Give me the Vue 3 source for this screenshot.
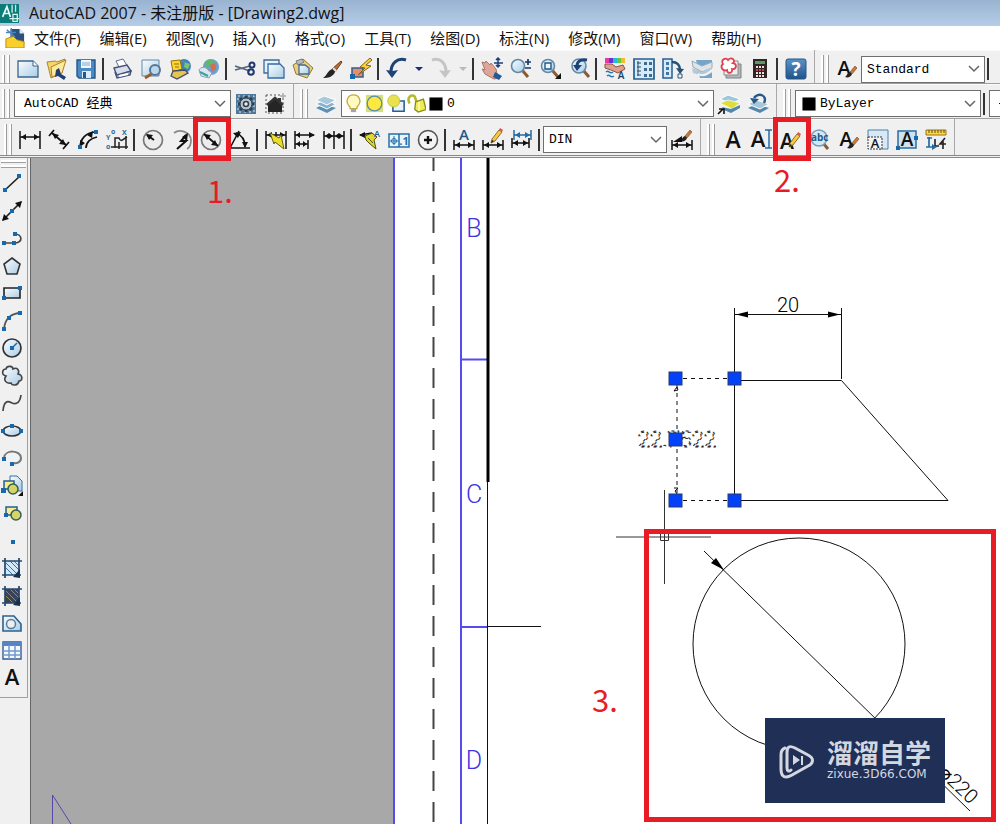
<script setup>
const menus = ['文件(F)', '编辑(E)', '视图(V)', '插入(I)', '格式(O)', '工具(T)', '绘图(D)', '标注(N)', '修改(M)', '窗口(W)', '帮助(H)']

const letterA = (x, y, size, fill = '#111') =>
  `<text x="${x}" y="${y}" font-size="${size}" text-anchor="middle" fill="${fill}" font-weight="600">A</text>`
const brush = (x, y) =>
  `<g transform="translate(${x} ${y})"><path d="M10 0L5 6l2 2 5-6z" fill="#c47b3a" stroke="#7a451c" stroke-width=".6"/><path d="M5 6l2 2c-1 3-4 4-7 3 2-1 2-4 5-5z" fill="#222"/></g>`
const pencil = (x, y) =>
  `<g transform="translate(${x} ${y})"><path d="M0 13l1-4 7-9 3 2-7 9z" fill="#f5c945" stroke="#79520e" stroke-width=".8"/><path d="M8 0l3 2 1-2-3-2z" fill="#d5594c"/><path d="M0 13l1-3 2 1z" fill="#222"/></g>`
const lens = (x, y, r = 6) =>
  `<path d="M${x + 4} ${y + 4}l6 7" stroke="#8a5a34" stroke-width="3"/><circle cx="${x}" cy="${y}" r="${r}" fill="url(#sheet)" stroke="#6289a8" stroke-width="1.6"/>`
const linear = (y, x1, x2, c = '#111') =>
  `<path d="M${x1} ${y - 5}v10M${x2} ${y - 5}v10M${x1} ${y}H${x2}" stroke="${c}" stroke-width="1.5" fill="none"/><path d="M${x1 + 1} ${y}l5-3v6zM${x2 - 1} ${y}l-5-3v6z" fill="${c}"/>`
const node = (x, y) => `<rect x="${x - 2}" y="${y - 2}" width="4" height="4" fill="#1769ad"/>`
const hatch = (bg, line) =>
  `<rect x="4" y="4" width="14" height="14" fill="${bg}"/><path d="M5 6l12 12M5 11l7 7M9 4l9 9M13 4l5 5" stroke="${line}"/><path d="M1 4h20M1 18h19M4 1v20M18 1v16" stroke="#24486e" stroke-width="1.7"/><path d="M12 20l7-8v9z" fill="#17304d"/>`

const icons = {
  app: '<rect width="22" height="22" fill="#0b7c77"/><path d="M3 15L8 3l4 12M5 11h6" fill="none" stroke="#e8ffff" stroke-width="2"/><path d="M14 1v9M18 1v8M11 17h11M15 12h5v8h-5z" stroke="#d4f3ef" stroke-width="1.5" fill="none"/>',
  doc: '<path d="M6 1h10l5 5v12H6z" fill="#2b5180"/><path d="M16 1v5h5" fill="#dfeaf5"/><path d="M1 12l8-3 4 4 8 2v7H1z" fill="#f9cf2c" stroke="#b8860b"/><path d="M2 2l9 8M7 0v10M1 5h11" stroke="#4d86bd" stroke-width="1.5"/>',
  new: '<path d="M1 3h15l5 5v11H1z" fill="url(#sheet)" stroke="#39668f" stroke-width="1.3"/><path d="M16 3v5h5" fill="#fff" stroke="#39668f"/>',
  open: '<path d="M1 4l8-1 2 1 8-3-3 14-11 5z" fill="#f5d568" stroke="#a9842b"/><path d="M5 9L20 2l-4 13-10 4z" fill="#ffe99b" stroke="#a9842b"/><path d="M10 12l3-2 2 6 5 3-2 3-6-4-3 1z" fill="#213d73"/>',
  save: '<path d="M2 2h18v18H4l-2-2z" fill="#4b8ac2" stroke="#24568b" stroke-width="1.4"/><path d="M6 2h10v8H6z" fill="#eef7ff"/><path d="M7 13h9v7H7z" fill="#dcebf6"/><path d="M8 14h3v6H8z" fill="#24568b"/><path d="M7 5h8M7 7h8" stroke="#83abc9"/>',
  print: '<path d="M5 3l7-2 5 8-8 2z" fill="#fff" stroke="#596d96"/><path d="M3 10l13-3 4 6-14 5z" fill="#d9deea" stroke="#42527c" stroke-width="1.4"/><path d="M4 14l2 6 13-3 1-4-14 4z" fill="#aab5cf" stroke="#42527c" stroke-width="1.4"/><path d="M8 18l9-2" stroke="#fff" stroke-width="2"/>',
  preview: '<path d="M2 2h17v16H2z" fill="url(#sheet)" stroke="#6488a8"/><path d="M13 15l-8 5" stroke="#9a5e2c" stroke-width="3"/><circle cx="15" cy="12" r="5" fill="#b9d8ee" stroke="#567792" stroke-width="2"/>',
  publish: '<circle cx="15" cy="8" r="7" fill="#3f83bd"/><path d="M11 3l5 1-1 5 4 2 2-5z" fill="#7ec46b"/><path d="M2 3l9-1 2 9-9 3z" fill="#ffd62e" stroke="#96700e"/><path d="M5 6h5M6 9h4" stroke="#8c6c16"/><path d="M4 13l12-1 3 3-11 6-6-3z" fill="#e3c74c" stroke="#434b70" stroke-width="1.3"/>',
  globe: '<circle cx="13" cy="9" r="8" fill="#6a9fd0"/><path d="M8 3c3-3 9 0 10 3l-4 5-2-3-5 1z" fill="#62b86a"/><path d="M12 7l5-2 1 6-4 3z" fill="#dc6a4f"/><path d="M1 12c1-3 7-4 9 0l4 3-3 5-8-2z" fill="#dbe6ef" stroke="#8aa1b5"/><path d="M2 14l8 4" stroke="#39a2a0" stroke-width="2"/>',
  cut: '<path d="M1 8l15 5M1 12l15-4" stroke="#56677a" stroke-width="1.7"/><circle cx="18" cy="7" r="2.5" fill="none" stroke="#1e376c" stroke-width="2"/><circle cx="17" cy="14" r="2.8" fill="none" stroke="#1e376c" stroke-width="2"/>',
  copy: '<path d="M1 2h15v13H1z" fill="#e6f1fa" stroke="#376ba1" stroke-width="1.3"/><path d="M5 6h12l4 4v10H5z" fill="url(#sheet)" stroke="#376ba1" stroke-width="1.3"/>',
  paste: '<path d="M1 7l10-6 10 9-6 10-11-4z" fill="#e8cf7c" stroke="#9a7a2c"/><path d="M4 3l6-2 2 3-6 3z" fill="#b8bec5" stroke="#72787e"/><path d="M7 7h6l4 3v6H7z" fill="url(#sheet)" stroke="#3f6b97" stroke-width="1.3"/>',
  brush: '<path d="M20 3l-9 8 3 3 7-10z" fill="#b86e34" stroke="#6b3d1e"/><path d="M11 11l3 3c-2 5-7 6-12 6 4-2 4-7 9-9z" fill="#252525"/><path d="M12 10l4 4" stroke="#ddd" stroke-width="2"/>',
  block: '<path d="M2 10h11v9H2z" fill="#e88d6a" stroke="#315e8d" stroke-width="1.5"/><path d="M20 0l-10 9 5 1-7 7 13-9-5-1 6-5z" fill="#ffcf3b" stroke="#806321"/><path d="M0 16h5v5H0z" fill="#1769ad"/>',
  undo: '<path d="M20 2C11-1 5 6 5 14" fill="none" stroke="#1d4277" stroke-width="3"/><path d="M0 12l6 8 6-8-5 1z" fill="#1d4277"/>',
  redo: '<path d="M2 2c9-3 14 4 14 12" fill="none" stroke="#c5c5c5" stroke-width="3"/><path d="M21 12l-6 8-6-8 5 1z" fill="#c5c5c5"/>',
  pan: '<path d="M1 4l3 1 1-2 4 4 1-2 5 6 1 5 3 4-6 1-9-5-3-5 3 1z" fill="#dfa597" stroke="#a87668"/><path d="M14 14l7 4-3 4-6-3z" fill="#1e5b98"/><path d="M17 0v9M13 5h9M15 2l2-2 2 2M15 7l2 2 2-2" stroke="#173f78" stroke-width="1.5" fill="none"/>',
  zoomrt: lens(8, 8, 6.5) + '<path d="M18 1v6M15 4h6M15 10h6" stroke="#173a65" stroke-width="1.7"/>',
  zoomwin: lens(9, 8, 6.5) + '<path d="M6 5h6v6H6z" fill="#eaf6ff" stroke="#235783" stroke-width="1.4"/><path d="M22 15v6h-6z" fill="#111"/>',
  zoomprev: lens(11, 8, 7) + '<path d="M19 2c-6-1-10 1-10 6" fill="none" stroke="#1d4277" stroke-width="3"/><path d="M5 7l4 6 5-6z" fill="#1d4277"/>',
  props: '<path d="M1 0h4v5H1z" fill="#e939a4"/><path d="M5 0h4v5H5z" fill="#5b36dc"/><path d="M9 0h4v5H9z" fill="#28bad6"/><path d="M13 0h4v5h-4z" fill="#63cb37"/><path d="M17 0h4v5h-4z" fill="#f2bb30"/><path d="M1 6l7 0 4 3 7-2 2 4-7 4-7-3-6-2z" fill="#e0a08a" stroke="#855344"/><path d="M2 14c3-3 3 3 7 0M3 18c3-3 3 3 7 0" stroke="#287ab6" stroke-width="1.5" fill="none"/>' + letterA(17, 21, 10, '#143e6c'),
  dc: '<path d="M1 1h20v20H1z" fill="#d6eaf8" stroke="#245d93" stroke-width="1.7"/><path d="M4 5h4M4 9h4M4 13h4M4 17h4M5 3v15" stroke="#254969"/><path d="M11 4h3v3h-3zM16 4h3v3h-3zM11 10h3v3h-3zM16 10h3v3h-3zM11 16h3v3h-3zM16 16h3v3h-3z" fill="#3d6b90"/>',
  palettes: '<path d="M1 1h9v19H1z" fill="#d6eaf8" stroke="#245d93" stroke-width="1.5"/><path d="M4 4h3v3H4zM4 9h3v3H4zM4 14h3v3H4z" fill="#3c78ac"/><path d="M10 4c5 0 8 3 8 8" stroke="#245178" stroke-width="2.5" fill="none"/><path d="M14 10l8 1-4 5z" fill="#245178"/><path d="M16 16h4v4h-4z" fill="#eaf4fa" stroke="#33536c"/>',
  sheets: '<path d="M5 2h16v18H9z" fill="#74a5cb"/><path d="M1 3l10 5 10-4v6l-10 4-9-5z" fill="#dce5ea" stroke="#98a9b5"/><path d="M1 10l10 4 10-5v6l-9 3-10-3z" fill="#b7c8d4"/><path d="M7 16c5 3 10 0 14-4" stroke="#f1f5f7" stroke-width="2" fill="none"/>',
  markup: '<path d="M6 6h15v14H6z" fill="#b2b7bc" stroke="#7d8287"/><path d="M4 3h14v14H4z" fill="#eee" stroke="#888"/><path d="M3 6c-3-4 3-7 5-4 4-4 8 1 5 3 5 1 3 7-1 6 1 5-5 5-5 1-5 2-7-4-4-6z" fill="#fff" stroke="#e33f52" stroke-width="1.8"/>',
  calc: '<path d="M4 1h14v19H4z" fill="#2e2524"/><path d="M6 3h10v3H6z" fill="#5d9a62"/><path d="M7 9h2M10 9h2M13 9h2M7 12h2M10 12h2M13 12h2M7 15h2M10 15h2M13 15h2M7 18h2M10 18h2M13 18h2" stroke="#f1dddd" stroke-width="2"/><path d="M7 12h2M10 12h2M13 12h2" stroke="#c44848" stroke-width="2"/>',
  help: '<rect x="1" y="1" width="20" height="20" rx="2" fill="url(#helpfill)" stroke="#23568a"/><text x="11" y="18" font-size="19" font-weight="700" fill="#fff" text-anchor="middle">?</text>',
  style: letterA(8, 17, 20) + brush(9, 8),
  gear: '<path d="M1 1h20v20H1z" fill="#4f789b"/><path d="M3 3h16v16H3z" fill="none" stroke="#dbe7ef" stroke-dasharray="2 3"/><path d="M11 3v16M3 11h16M5 5l12 12M17 5L5 17" stroke="#2c3f50" stroke-width="3"/><circle cx="11" cy="11" r="6" fill="#b9c4ca" stroke="#303f4a"/><circle cx="11" cy="11" r="2.5" fill="#e9edf0" stroke="#303f4a" stroke-width="1.5"/>',
  home: '<path d="M2 2h15M2 2v18h17V5" fill="none" stroke="#555" stroke-dasharray="2 2"/><path d="M11 5l7 6v8H4v-8z" fill="#252525"/><path d="M3 12l8-7 8 7" stroke="#333" stroke-width="2.5" fill="none"/><path d="M14 5h3v4h-3z" fill="#333"/><path d="M19 0v6M16 3h6" stroke="#aaa" stroke-width="1.5"/>',
  layers: '<path d="M1 15l8-4 12 4-9 5z" fill="#5b8fb4"/><path d="M1 11l8-4 12 4-9 5z" fill="#86b0cc" stroke="#fff"/><path d="M1 7l8-4 12 4-9 5z" fill="#a9c8dc" stroke="#fff"/>',
  layercur: '<path d="M2 6l8-4 12 4-8 5z" fill="#9fc6df" stroke="#fff"/><path d="M2 10l8-3 12 3-8 6z" fill="#dede3a" stroke="#fff" stroke-width=".7"/><path d="M4 14l9 2 9-4v3l-9 5-7-3z" fill="#5286aa"/><path d="M0 21l5-5M1 16h5v5" stroke="#111" stroke-width="1.6" fill="none"/>',
  layerprev: '<path d="M1 15l8-4 13 4-9 5z" fill="#5687aa"/><path d="M1 11l8-4 13 4-9 5z" fill="#a8c6d9" stroke="#fff"/><path d="M17 10c4-8-6-11-10-5" fill="none" stroke="#285888" stroke-width="2.4"/><path d="M3 5l4 6 5-5z" fill="#285888"/>',
  dlinear: '<path d="M1 2v18M21 2v18M1 8h20" stroke="#111" stroke-width="1.5"/><path d="M2 8l5-3v6zM20 8l-5-3v6z" fill="#111"/>',
  daligned: '<path d="M6 1L1 7M21 13l-6 7M4 4l14 12" stroke="#111" stroke-width="1.7"/><path d="M4 4l7 2-4 4zM18 16l-7-1 4-5z" fill="#111"/>',
  darc: '<path d="M3 19C3 10 9 3 19 3M9 19c0-6 5-10 11-11" stroke="#111" stroke-width="1.7" fill="none"/><path d="M10 6l6-4-1 7zM3 18V11l5 3z" fill="#111"/>' + node(3, 18) + node(19, 3),
  dord: '<path d="M5 18h17M9 19V9h4c2 5 4 1 8-1M20 7v13M13 13v7" stroke="#222" stroke-width="1.5" fill="none"/><g font-size="7" font-weight="700" fill="#286ba0"><text x="0" y="11">Y</text><text x="0" y="20">o</text><text x="5" y="5">o</text><text x="16" y="6">X</text></g>',
  dradius: '<circle cx="11" cy="11" r="9.5" fill="#ededed" stroke="#777" stroke-width="1.7"/><path d="M5 6l7 5" stroke="#111" stroke-width="2"/><path d="M4 5l7 1-4 5z" fill="#111"/>',
  djog: '<path d="M3 4C8 0 19 2 20 11c0 5-2 8-4 9" fill="none" stroke="#888" stroke-width="1.7"/><path d="M15 6l-5 6h5l-9 8" stroke="#111" stroke-width="2" fill="none"/><path d="M17 4l-1 8-5-4z" fill="#111"/>',
  ddia: '<circle cx="11" cy="11" r="9.5" fill="#ededed" stroke="#777" stroke-width="1.7"/><path d="M4 5l14 12" stroke="#111" stroke-width="1.8"/><path d="M4 5l7 1-4 5zM18 17l-7-1 4-5z" fill="#111"/>',
  dangle: '<path d="M1 19h20M1 19L10 2M7 4c6 2 9 7 9 14" stroke="#111" stroke-width="1.6" fill="none"/><path d="M4 4l8-1-3 6zM16 19l-3-6h6z" fill="#111"/>',
  quick: '<path d="M1 2v18M21 2v18M1 6h20M11 3v7" stroke="#111" stroke-width="1.5"/><path d="M2 6l5-3v6zM20 6l-5-3v6z" fill="#111"/><path d="M5 4l9 5 2-3 3 14-9-7-1 2z" fill="#e9df28" stroke="#655b12"/>',
  baseline: '<path d="M1 2v18M14 11v9M1 6h19M1 15h13" stroke="#111" stroke-width="1.5"/><path d="M21 6l-6-3v6zM2 6l4-3v6zM2 15l4-3v6zM13 15l-4-3v6z" fill="#111"/>',
  cont: '<path d="M1 2v18M11 2v18M21 2v18M1 7h20" stroke="#111" stroke-width="1.5"/><path d="M2 7l4-3v6zM10 7L6 4v6zM12 7l4-3v6zM20 7l-4-3v6z" fill="#111"/>',
  leader: '<path d="M1 6l12-2" stroke="#111" stroke-width="1.7"/><path d="M0 6l6-3v6z" fill="#111"/><path d="M6 7l7-3 5 4-3 3 2 9-7-6-3-3z" fill="#ded92a" stroke="#4c4d19"/><path d="M9 9l5 5" stroke="#4c4d19"/>' + letterA(18, 8, 9, '#265a8f'),
  tol: '<path d="M1 5h20v13H1zM11 5v13" stroke="#2370a9" stroke-width="1.5" fill="#e9f4fb"/><circle cx="6" cy="12" r="2.5" fill="none" stroke="#2370a9"/><path d="M6 7v9M2 12h8" stroke="#2370a9"/><text x="16" y="16" font-size="11" font-weight="700" text-anchor="middle" fill="#2370a9">.1</text>',
  center: '<circle cx="11" cy="11" r="9.5" fill="#f4f4f4" stroke="#555" stroke-width="1.6"/><path d="M11 7v8M7 11h8" stroke="#111" stroke-width="2.4"/>',
  dedit: letterA(11, 11, 15, '#20598e') + linear(16, 1, 21),
  tedit: pencil(9, 1) + linear(16, 1, 21),
  update: linear(6, 3, 20, '#236ca5') + linear(14, 1, 18),
  dstyle: brush(9, 1) + linear(16, 1, 21) + '<path d="M2 13l9-6v6z" fill="#111"/>',
  mtext: letterA(11, 19, 23),
  stext: letterA(7, 18, 22) + '<path d="M14 1h7M18 1v18M14 19h7" stroke="#246ca5" stroke-width="1.5"/>',
  etext: letterA(7, 20, 21) + pencil(9, 5),
  find: '<path d="M14 14l5 6" stroke="#8a5a34" stroke-width="3"/><circle cx="10" cy="9" r="8" fill="#d3e8f5" stroke="#789bb7" stroke-width="1.5"/><text x="2" y="12" font-size="10" font-weight="700" fill="#225b8b">abc</text>',
  tscale: '<path d="M1 1h20v19H12V10H1z" fill="#d8e9f5" stroke="#4783ad"/><path d="M1 8h14v12H1z" fill="#f4f4f4" stroke="#333" stroke-dasharray="2 1"/>' + letterA(8, 19, 13),
  just: '<path d="M2 2h18v17H2z" fill="#cfe2f0" stroke="#286f9f" stroke-width="1.5"/>' + letterA(11, 17, 19) + node(20, 9) + node(2, 19),
  space: '<path d="M1 1h20v5H1z" fill="#ffd83d" stroke="#947224"/><path d="M4 1v3M7 1v3M10 1v3M13 1v3M16 1v3M19 1v3" stroke="#604b15"/><path d="M4 8v10M2 9h5M1 18h9" stroke="#246ba5" stroke-width="1.7"/><path d="M10 10v7h4M20 9l-5 6h6M18 12v8" stroke="#222" stroke-width="1.6" fill="none"/><path d="M7 15l5 3-5 3z" fill="#246ba5"/>',
  line: '<path d="M4 18L19 4" stroke="#222" stroke-width="1.7"/>' + node(4, 18) + node(18, 4),
  xline: '<path d="M2 20L20 2" stroke="#222" stroke-width="1.7"/><path d="M21 1l-2 7-5-5zM1 21l2-7 5 5z" fill="#111"/>' + node(11, 11),
  pline: '<path d="M2 16h11M13 16c10 0 8-9 1-9" stroke="#444" stroke-width="1.7" fill="none"/>' + node(3, 16) + node(13, 16) + node(14, 7),
  polygon: '<path d="M11 3l8 6-3 10H6L3 9z" fill="url(#sheet)" stroke="#333" stroke-width="1.6"/>',
  rect: '<path d="M3 6h16v10H3z" fill="url(#sheet)" stroke="#222" stroke-width="1.6"/>' + node(3, 16) + node(19, 6),
  arc: '<path d="M3 19C4 9 10 3 20 3" fill="none" stroke="#555" stroke-width="1.8"/>' + node(3, 19) + node(8, 8) + node(19, 3),
  circle: '<circle cx="11" cy="11" r="9" fill="url(#sheet)" stroke="#333" stroke-width="1.7"/><path d="M11 11l5-5" stroke="#1769ad" stroke-width="1.5"/>' + node(11, 11),
  cloud: '<path d="M5 11C0 10 1 4 5 4c1-4 7-3 7 0 4-2 7 1 5 5 5 1 5 7 1 7-1 5-7 5-8 2-5 1-8-3-5-7z" fill="url(#sheet)" stroke="#444" stroke-width="1.6"/>',
  spline: '<path d="M2 19c1-13 7-9 9-8 5 2 8-1 9-8" fill="none" stroke="#444" stroke-width="1.7"/>',
  ellipse: '<ellipse cx="11" cy="11" rx="9" ry="5" fill="url(#sheet)" stroke="#333" stroke-width="1.7"/>' + node(11, 6) + node(2, 11) + node(20, 11),
  earc: '<path d="M3 11C4 2 20 3 20 11c0 4-4 6-8 5" fill="#edf4f7" stroke="#777" stroke-width="2"/>' + node(3, 12) + node(11, 17),
  insert: '<path d="M9 1h7l5 5v10H9z" fill="url(#sheet)" stroke="#3a6d99"/><path d="M3 6h10v8H3z" fill="#f5ed94" stroke="#245f8f" stroke-width="1.5"/><circle cx="12" cy="14" r="5" fill="#d4d468" stroke="#365d55" stroke-width="1.5"/><path d="M0 13h5v5H0z" fill="#1769ad"/><path d="M22 16v5h-5z" fill="#111"/>',
  make: '<path d="M5 5h11v8H5z" fill="#f5ed94" stroke="#245f8f" stroke-width="1.5"/><circle cx="15" cy="13" r="5" fill="#d4d468" stroke="#365d55" stroke-width="1.5"/><path d="M3 11h4v4H3z" fill="#1769ad"/>',
  point: node(12, 12),
  hatch: hatch('#d5e8f5', '#2c78ad'),
  gradient: hatch('#3a4355', '#968a4d'),
  region: '<path d="M2 4h11l7 8v7H2z" fill="url(#sheet)" stroke="#2c628f" stroke-width="1.6"/><circle cx="10" cy="12" r="4.5" fill="#eee" stroke="#557e9e" stroke-width="1.5"/>',
  table: '<path d="M2 2h18v17H2z" fill="#f7fbff" stroke="#315b97" stroke-width="1.4"/><path d="M2 2h18v4H2z" fill="#5684c4"/><path d="M2 11h18M2 15h18M8 5v14M14 5v14" stroke="#7199ce" stroke-width="1.5"/>',
  text: letterA(11, 18, 22),
  bulb: '<path d="M7 15c-7-7-2-14 4-14s11 7 4 14v2H7z" fill="#fffac1" stroke="#c9a83a" stroke-width="1.5"/><path d="M8 17h6v4H8z" fill="#9fa6ae"/>',
  sun: '<path d="M1 1h20v20H1z" fill="#d8df75"/><circle cx="11" cy="11" r="8.5" fill="#ffe83e" stroke="#568bbd" stroke-width="1.5"/>',
  freeze: '<path d="M8 8h13v12H8z" fill="#e7f2fa" stroke="#255f94" stroke-width="1.8"/><circle cx="9" cy="8" r="7" fill="#e8e24c" stroke="#c6c04a"/>',
  lock: '<path d="M3 11C-1 3 6 0 9 3l2 6" fill="none" stroke="#b7b92a" stroke-width="3"/><path d="M10 9l9-3 3 12-9 3-4-3z" fill="#ecec54" stroke="#89891e" stroke-width="1.5"/><path d="M14 9v10" stroke="#fff7ac" stroke-width="2"/>',
  swatch: '<path d="M2 2h18v18H2z" fill="#000"/>',
  edge: '<path d="M8 16h14M8 12v8" stroke="#111" stroke-width="2"/><path d="M9 16l6-4v8z" fill="#111"/>'
}

const combo = (label, value, size, adorn = []) => ({ label, value, size, adorn })

const rows = [
  {
    name: 'r1',
    bars: [
      { name: '标准', items: ['new', 'open', 'save', '|', 'print', 'preview', 'publish', 'globe', '|', 'cut', 'copy', 'paste', 'brush', 'block', '|', 'undo', 'v', 'redo', 'w', '|', 'pan', 'zoomrt', 'zoomwin', 'zoomprev', '|', 'props', 'dc', 'palettes', 'sheets', 'markup', 'calc', '|', 'help'] },
      { name: '样式', items: ['style', combo('文字样式', 'Standard', 'small'), '|', 'edge'] }
    ]
  },
  {
    name: 'r2',
    bars: [
      { name: '工作空间', items: [combo('工作空间', 'AutoCAD 经典', 'medium'), 'gear', 'home'] },
      { name: '图层', items: ['layers', combo('图层', '0', 'large', ['bulb', 'sun', 'freeze', 'lock', 'swatch']), 'layercur', 'layerprev'] },
      { name: '特性', items: [combo('颜色', 'ByLayer', 'color', ['swatch']), '|', combo('线型', '—— ByLayer', 'medium')] }
    ]
  },
  {
    name: 'r3',
    bars: [
      { name: '标注', items: ['dlinear', 'daligned', 'darc', 'dord', '|', 'dradius', 'djog', 'ddia', 'dangle', '|', 'quick', 'baseline', 'cont', '|', 'leader', 'tol', 'center', '|', 'dedit', 'tedit', 'update', '|', combo('标注样式', 'DIN', 'small'), 'dstyle'] },
      { name: '文字', items: ['mtext', 'stext', 'etext', 'find', 'style', 'tscale', 'just', 'space'] }
    ]
  }
]

const drawTools = ['line', 'xline', 'pline', 'polygon', 'rect', 'arc', 'circle', 'cloud', 'spline', 'ellipse', 'earc', 'insert', 'make', 'point', 'hatch', 'gradient', 'region', 'table', 'text']
const grips = [[675, 378], [734, 378], [675, 439], [675, 500], [734, 500]]
</script>

<template>
  <div class="window">
    <svg class="paints" aria-hidden="true">
      <defs>
        <linearGradient id="sheet" x1="0" y1="0" x2="1" y2="1">
          <stop offset="0" stop-color="#fafdff" />
          <stop offset="1" stop-color="#a9cce6" />
        </linearGradient>
        <linearGradient id="helpfill" x1="0" y1="0" x2="0" y2="1">
          <stop offset="0" stop-color="#5b92c6" />
          <stop offset="1" stop-color="#205389" />
        </linearGradient>
      </defs>
    </svg>

    <header class="title">
      <svg class="logo" viewBox="0 0 22 22" aria-hidden="true" v-html="icons.app"></svg>
      <h1>AutoCAD 2007 - 未注册版 - [Drawing2.dwg]</h1>
    </header>

    <nav class="menu">
      <svg class="doc" viewBox="0 0 22 22" aria-hidden="true" v-html="icons.doc"></svg>
      <button v-for="m in menus" :key="m" type="button">{{ m }}</button>
    </nav>

    <div v-for="row in rows" :key="row.name" class="row" :class="row.name">
      <div v-for="bar in row.bars" :key="bar.name" class="bar" role="toolbar" :aria-label="bar.name">
        <span class="grip"></span>
        <template v-for="(it, i) in bar.items" :key="i">
          <span v-if="it === '|'" class="sep"></span>
          <button v-else-if="it === 'v' || it === 'w'" type="button" class="drop" :class="{ off: it === 'w' }" aria-label="展开"></button>
          <button v-else-if="typeof it === 'string'" type="button" class="tool" :aria-label="it">
            <svg viewBox="0 0 22 22" v-html="icons[it]"></svg>
            <span v-if="it === 'ddia' || it === 'etext'" class="mark"></span>
          </button>
          <label v-else class="combo" :class="it.size">
            <svg v-for="a in it.adorn" :key="a" class="adorn" :class="a" viewBox="0 0 22 22" aria-hidden="true" v-html="icons[a]"></svg>
            <select :aria-label="it.label">
              <option>{{ it.value }}</option>
            </select>
            <svg class="chevron" viewBox="0 0 12 8" aria-hidden="true"><path d="M1 1l5 5 5-5" /></svg>
          </label>
        </template>
      </div>
    </div>

    <div class="work">
      <aside class="side">
        <span class="hgrip"></span>
        <div class="tools" role="toolbar" aria-label="绘图">
          <button v-for="t in drawTools" :key="t" type="button" :aria-label="t">
            <svg viewBox="0 0 22 22" v-html="icons[t]"></svg>
          </button>
        </div>
      </aside>

      <main class="canvas">
        <svg viewBox="31 158 969 666" preserveAspectRatio="xMinYMin slice">
          <rect x="31" y="158" width="362" height="666" fill="#a8a8a8" />
          <g class="frame">
            <path d="M394 158V824M461 158V824M461 359.500H487M461 627H487" />
            <path class="purple" d="M52.500 824V795L71 824" />
          </g>
          <path class="ink soft" stroke-dasharray="20 11" d="M433.500 151V824" />
          <path class="ink" d="M487.500 482V824M487 626.500H541" />
          <path class="ink bold" d="M488 158V482" />
          <g class="zone">
            <text x="474" y="237">B</text>
            <text x="474" y="503">C</text>
            <text x="474" y="769">D</text>
          </g>

          <path class="ink" d="M734.500 308V500.500H948L841.500 380.500H734.500M841.500 308V379M735 314.500H841" />
          <path d="M736 314.500l12-3v6zM840 314.500l-12-3v6z" />
          <text class="dim" x="788" y="312">20</text>

          <path class="ink" stroke-dasharray="4 4" d="M683 378.500H728M683 500.500H728M677 385V494" />
          <path class="ink" d="M674 391l3-4 1 3-4 1M674 488h4l-3 3 2 3" />
          <text class="dim picked" x="677" y="447">22.7522</text>
          <rect v-for="(g, i) in grips" :key="i" class="node" :x="g[0] - 6" :y="g[1] - 6" width="13" height="13" />

          <circle class="ink" cx="799" cy="644" r="106" />
          <path class="ink" d="M704 551L970 811" />
          <path d="M724 570l-13-7 5-5z" />
          <text class="dim" text-anchor="end" transform="translate(970 805) rotate(44)">⌀220</text>

          <path class="ink cross" d="M616 537H711M664.500 490V584M660.500 532.500h8v8h-8z" />
          <rect class="box" x="646.500" y="531.500" width="347" height="288" />

          <g class="note">
            <text x="207" y="203">1.</text>
            <text x="774" y="192">2.</text>
            <text x="592" y="712">3.</text>
          </g>

          <rect x="765" y="718" width="180" height="85" fill="#202f55" />
          <g class="brand">
            <path d="M785 748c-3 1-4 3-4 7v14c0 8 4 10 11 6l16-9c6-3 6-8 0-11l-13-7c-6-3-8-1-8 5v15c0 3 2 4 4 2" />
            <path class="solid" d="M793 755l7 5-7 5zM801 756h2v9h-2z" />
            <text class="cn" x="827" y="763">溜溜自学</text>
            <text class="url" x="827" y="778">zixue.3D66.COM</text>
          </g>
        </svg>
      </main>
    </div>
  </div>
</template>

<style>
html,
body {
  margin: 0;
  background: #f0f0f0;
}
</style>

<style scoped>
.window {
  display: flex;
  flex-direction: column;
  height: 100vh;
  overflow: hidden;
  background: #f0f0f0;
  color: #111;
  font-family: "Open Sans", "Noto Sans CJK SC", sans-serif;
}
button {
  border: 0;
  padding: 0;
  background: none;
  color: inherit;
  font: inherit;
}
.paints {
  position: absolute;
  width: 0;
  height: 0;
}
.title {
  display: flex;
  align-items: center;
  gap: 10px;
  height: 26px;
  flex: none;
  background: linear-gradient(#98b3d0, #b6cde8);
}
.logo {
  width: 19px;
  height: 19px;
}
h1 {
  margin: 0;
  font-size: 16px;
  font-weight: 400;
  line-height: 24px;
  white-space: nowrap;
}
.menu {
  display: flex;
  align-items: center;
  gap: 1px;
  height: 24px;
  flex: none;
  padding-left: 5px;
  background: #fff;
}
.menu button {
  padding: 0 9px;
  font-size: 15px;
  line-height: 24px;
  white-space: nowrap;
}
.doc {
  width: 20px;
  height: 20px;
  flex: none;
}
.doc + button {
  padding-left: 8px;
}
.row {
  display: flex;
  flex: none;
  gap: 4px;
  overflow: hidden;
  border-bottom: 1px solid #a0a0a0;
}
.r1 {
  height: 33px;
}
.r2 {
  height: 34px;
}
.r3 {
  height: 36px;
  overflow: visible;
  padding-left: 2px;
  border-bottom: 0;
}
.bar {
  display: flex;
  align-items: center;
  flex: none;
  padding: 5px 4px 0 2px;
  border-right: 1px solid #a8a8a8;
  box-shadow: inset 0 1px #fafafa;
}
.grip {
  align-self: stretch;
  width: 8px;
  margin-right: 3px;
  background: linear-gradient(90deg, #fff 2px, #9c9c9c 2px 3px, #f0f0f0 3px 5px, #fff 5px 7px, #9c9c9c 7px);
}
.sep {
  width: 2px;
  height: 22px;
  margin: 0 3px 0 2px;
  background: #333;
}
.tool {
  position: relative;
  display: flex;
  justify-content: center;
  width: 29px;
}
.tool svg,
.tools svg {
  display: block;
  width: 22px;
  height: 22px;
  overflow: visible;
}
.mark {
  position: absolute;
  inset: -12px -6px -10px -3px;
  z-index: 2;
  border: 5px solid #e81c24;
}
.drop {
  width: 15px;
  height: 22px;
  display: flex;
  align-items: center;
  justify-content: center;
}
.drop::before {
  content: "";
  border: 4px solid transparent;
  border-top-color: #1c2f78;
  border-bottom: 0;
}
.drop.off::before {
  border-top-color: #bbb;
}
.combo {
  display: flex;
  align-items: center;
  box-sizing: border-box;
  height: 27px;
  margin-left: 1px;
  border: 1px solid #6f6f6f;
  background: #fff;
}
.small {
  width: 124px;
  margin-left: 0;
}
.medium {
  width: 217px;
}
.large {
  width: 373px;
}
.color {
  width: 186px;
}
.combo select {
  flex: 1;
  min-width: 0;
  height: 24px;
  border: 0;
  padding: 0 0 0 5px;
  appearance: none;
  background: transparent;
  color: #000;
  font-family: "Liberation Mono", "Noto Sans CJK SC", monospace;
  font-size: 13px;
}
.medium select {
  padding-left: 9px;
}
.color select,
.large select {
  padding-left: 3px;
}
.adorn {
  width: 19px;
  height: 19px;
  margin-left: 2px;
}
.swatch {
  width: 16px;
  height: 16px;
}
.color .swatch {
  margin-left: 5px;
}
.chevron {
  width: 12px;
  height: 8px;
  margin-right: 4px;
}
.chevron path {
  fill: none;
  stroke: #666;
  stroke-width: 1.5;
}
.work {
  display: flex;
  flex: 1;
  min-height: 0;
  border-top: 3px double #888;
}
.side {
  width: 27px;
  flex: none;
  align-self: flex-start;
  border-right: 1px solid #a0a0a0;
  border-bottom: 1px solid #a0a0a0;
}
.hgrip {
  display: block;
  height: 8px;
  margin: 2px 1px;
  background: linear-gradient(#fff 2px, #a0a0a0 2px 3px, #f0f0f0 3px 5px, #fff 5px 7px, #a0a0a0 7px);
}
.tools {
  display: flex;
  flex-direction: column;
  justify-content: space-between;
  height: 517px;
  padding: 2px 4px 8px 1px;
}
.canvas {
  flex: 1;
  min-width: 0;
  margin-left: 2px;
  overflow: hidden;
  border-left: 1px solid #666;
  background: #fff;
}
.canvas > svg {
  display: block;
  width: 100%;
  height: 100%;
}
.frame path {
  fill: none;
  stroke: #554bf0;
  stroke-width: 2;
}
.frame .purple {
  stroke: #5548a8;
  stroke-width: 1;
}
.ink {
  fill: none;
  stroke: #111;
  stroke-width: 1;
}
.soft {
  stroke: #444;
  stroke-width: 2;
}
.bold {
  stroke: #000;
  stroke-width: 3;
}
.cross {
  stroke: #333;
}
.zone text {
  fill: #3c32e6;
  font-family: Roboto, sans-serif;
  font-weight: 300;
  font-size: 25px;
  text-anchor: middle;
}
.dim {
  font-family: Roboto, "DejaVu Sans", sans-serif;
  font-weight: 300;
  font-size: 20px;
  text-anchor: middle;
}
.dim[text-anchor="end"] {
  text-anchor: end;
}
.picked {
  fill: none;
  stroke: #222;
  stroke-width: 1;
  stroke-dasharray: 3 3;
  font-size: 22px;
}
.node {
  fill: #0442fa;
  stroke: #243a70;
}
.box {
  fill: none;
  stroke: #e81c24;
  stroke-width: 5;
}
.note text {
  fill: #e81c24;
  font-family: "Noto Sans CJK SC", sans-serif;
  font-size: 31px;
}
.brand path {
  fill: none;
  stroke: #d3d7e0;
  stroke-width: 3;
  stroke-linecap: round;
}
.brand .solid {
  fill: #d3d7e0;
  stroke: none;
}
.brand text {
  fill: #d3d7e0;
}
.cn {
  font-family: "Noto Sans CJK SC", sans-serif;
  font-size: 26px;
  font-weight: 700;
}
.url {
  font-family: "DejaVu Sans", sans-serif;
  font-size: 12px;
}
</style>
